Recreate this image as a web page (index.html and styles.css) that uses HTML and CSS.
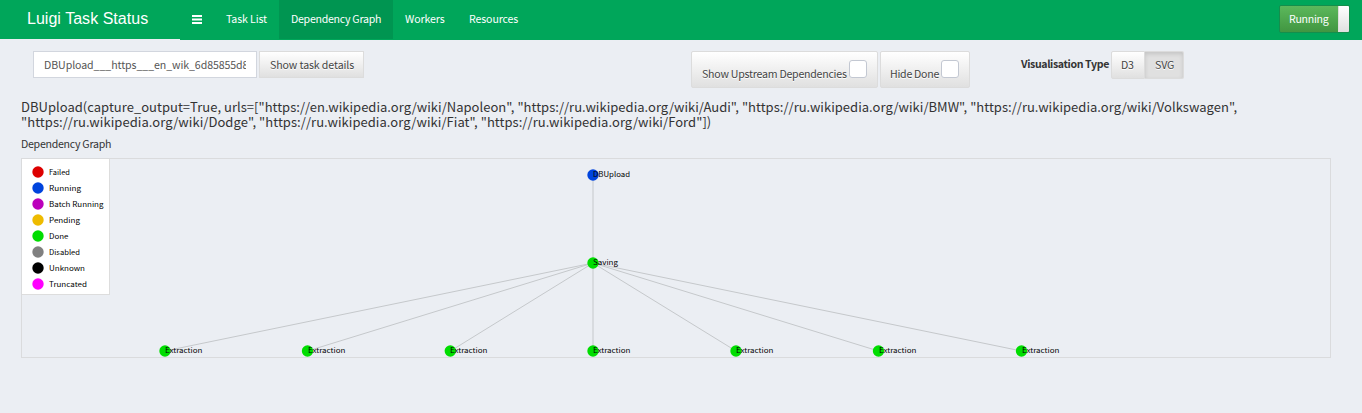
FILE: index.html
```html
<!DOCTYPE html>
<html lang="en">
<head>
<meta charset="utf-8">
<title>Luigi Task Visualiser</title>
<link rel="stylesheet" href="styles.css">
</head>
<body>
<header class="header">
  <a class="logo">Luigi Task Status</a>
  <nav class="nav">
    <a class="nav-toggle"><svg width="10" height="9" viewBox="0 0 10 9"><path d="M0 1h10M0 4.500h10M0 8h10" stroke="#fff" stroke-width="1.800"/></svg></a>
    <a class="nav-item nav-tasks">Task List</a>
    <a class="nav-item nav-graph active">Dependency Graph</a>
    <a class="nav-item nav-workers">Workers</a>
    <a class="nav-item nav-resources">Resources</a>
  </nav>
  <div class="switch"><span class="switch-on">Running</span><span class="switch-handle"></span></div>
</header>
<main class="content">
  <div class="toolbar">
    <div class="search">
      <div class="task-input"><span class="task-id">DBUpload___https___en_wik_6d85855d8</span></div>
      <button class="btn details">Show task details</button>
    </div>
    <div class="filters">
      <label class="btn filter upstream"><span>Show Upstream Dependencies</span><i class="check"></i></label>
      <label class="btn filter hide"><span>Hide Done</span><i class="check"></i></label>
    </div>
    <div class="vis">
      <b class="vis-label">Visualisation Type</b>
      <div class="group"><button class="btn d3">D3</button><button class="btn svg pressed">SVG</button></div>
    </div>
  </div>
  <h1 class="title"><span class="line one">DBUpload(capture_output=True, urls=["https://en.wikipedia.org/wiki/Napoleon", "https://ru.wikipedia.org/wiki/Audi", "https://ru.wikipedia.org/wiki/BMW", "https://ru.wikipedia.org/wiki/Volkswagen",</span> <span class="line two">"https://ru.wikipedia.org/wiki/Dodge", "https://ru.wikipedia.org/wiki/Fiat", "https://ru.wikipedia.org/wiki/Ford"])</span></h1>
  <p class="subtitle">Dependency Graph</p>
  <div class="graph">
    <svg class="canvas" width="1308" height="198" viewBox="22 159 1308 198">
      <g class="edges">
        <path d="M593 175V263M593 263L165 351M593 263L307.500 351M593 263L450.500 351M593 263V351M593 263L736 351M593 263L878.500 351M593 263L1021.500 351"/>
      </g>
      <g class="done">
        <circle cx="593" cy="175" r="5.700" class="running"/>
        <circle cx="593" cy="263" r="5.700"/><circle cx="165" cy="351" r="5.700"/><circle cx="307.500" cy="351" r="5.700"/><circle cx="450.300" cy="351" r="5.700"/><circle cx="593" cy="351" r="5.700"/><circle cx="736" cy="351" r="5.700"/><circle cx="878.500" cy="351" r="5.700"/><circle cx="1021.500" cy="351" r="5.700"/>
      </g>
      <g class="labels">
        <text x="593" y="177" textLength="37" lengthAdjust="spacingAndGlyphs">DBUpload</text>
        <text x="593" y="265" textLength="25" lengthAdjust="spacingAndGlyphs">Saving</text>
        <text x="165" y="353" textLength="37.500" lengthAdjust="spacingAndGlyphs">Extraction</text>
        <text x="308" y="353" textLength="37.500" lengthAdjust="spacingAndGlyphs">Extraction</text>
        <text x="450" y="353" textLength="37.500" lengthAdjust="spacingAndGlyphs">Extraction</text>
        <text x="593" y="353" textLength="37.500" lengthAdjust="spacingAndGlyphs">Extraction</text>
        <text x="736" y="353" textLength="37.500" lengthAdjust="spacingAndGlyphs">Extraction</text>
        <text x="879" y="353" textLength="37.500" lengthAdjust="spacingAndGlyphs">Extraction</text>
        <text x="1022" y="353" textLength="37.500" lengthAdjust="spacingAndGlyphs">Extraction</text>
      </g>
      <rect x="21" y="158" width="88.500" height="136.500" class="legend-box"/>
      <g>
        <circle cx="38" cy="172" r="5.700" fill="#d00"/><circle cx="38" cy="188" r="5.700" fill="#04d"/><circle cx="38" cy="204" r="5.700" fill="#b0b"/><circle cx="38" cy="220" r="5.700" fill="#eb0"/><circle cx="38" cy="236" r="5.700" fill="#0d0"/><circle cx="38" cy="252" r="5.700" fill="#808080"/><circle cx="38" cy="268" r="5.700" fill="#000"/><circle cx="38" cy="284" r="5.700" fill="#f0f"/>
      </g>
      <g class="labels">
        <text x="49" y="175" textLength="21" lengthAdjust="spacingAndGlyphs">Failed</text>
        <text x="49" y="191" textLength="32" lengthAdjust="spacingAndGlyphs">Running</text>
        <text x="49" y="207" textLength="54.500" lengthAdjust="spacingAndGlyphs">Batch Running</text>
        <text x="49" y="223" textLength="31" lengthAdjust="spacingAndGlyphs">Pending</text>
        <text x="49" y="239" textLength="19.500" lengthAdjust="spacingAndGlyphs">Done</text>
        <text x="49" y="255" textLength="31" lengthAdjust="spacingAndGlyphs">Disabled</text>
        <text x="49" y="271" textLength="36" lengthAdjust="spacingAndGlyphs">Unknown</text>
        <text x="49" y="287" textLength="38" lengthAdjust="spacingAndGlyphs">Truncated</text>
      </g>
    </svg>
  </div>
</main>
</body>
</html>
```
FILE: styles.css
```css
* { box-sizing: border-box; }
body { margin: 0; height: 413px; overflow: hidden; background: #ebeef3; color: #333; font: 10.6px/16px "Noto Sans CJK SC", "Open Sans", sans-serif; letter-spacing: -.12px; }
.header { display: flex; height: 40px; background: #00a65a; color: #fff; }
.logo { width: 180px; height: 40px; padding-left: 27px; border-bottom: 1px solid #ebeef3; font: 16px/38px "Liberation Sans", Arial, sans-serif; letter-spacing: .03px; white-space: nowrap; }
.nav { display: flex; height: 39px; line-height: 37px; white-space: nowrap; }
.nav-toggle { display: flex; align-items: center; width: 34px; padding-left: 12px; }
.nav-item { padding-left: 12px; }
.nav-tasks { width: 65px; }
.nav-graph { width: 114px; letter-spacing: -.27px; }
.nav-workers { width: 64px; }
.nav-resources { width: 73px; }
.active { background: #009551; }
.switch { display: flex; width: 71px; height: 28px; margin: 5px 12px 0 auto; border: 1px solid #158e4c; border-radius: 2px; overflow: hidden; }
.switch-on { width: 58px; padding-left: 9px; line-height: 25px; letter-spacing: -.3px; background: linear-gradient(#5cb85c, #419641); }
.switch-handle { flex: 1; background: linear-gradient(#fff, #e0e0e0); border-left: 1px solid #ddd; }
.content { padding: 11px 31px 0 21px; }
.toolbar { display: flex; height: 38px; }
.search { display: flex; gap: 2px; width: 670px; padding-left: 12px; }
.task-input { width: 224px; height: 27px; padding: 0 10px; border: 1px solid #d2d6de; background: #fff; color: #555; line-height: 25px; letter-spacing: -.08px; }
.task-id { display: block; width: 202px; overflow: hidden; white-space: nowrap; }
.btn { height: 27px; margin: 0; padding: 0 0 0 10px; border: 1px solid #dcdcdc; border-radius: 2px; background: linear-gradient(#fff, #e0e0e0); color: #444; font: inherit; line-height: 25px; letter-spacing: -.1px; text-align: left; text-shadow: 0 1px 0 #fff; white-space: nowrap; }
.details { width: 105px; border-radius: 0; }
.filters { display: flex; gap: 2px; width: 330px; }
.filter { display: flex; height: 37px; line-height: 43px; }
.upstream { width: 187px; letter-spacing: -.24px; }
.hide { width: 90px; padding-left: 9px; letter-spacing: -.27px; }
.check { flex: none; width: 18px; height: 18px; margin: 8px 10px 0 auto; border: 1px solid #c3c8d2; border-radius: 3px; background: #fff; }
.vis { display: flex; }
.vis-label { width: 90px; line-height: 25px; letter-spacing: -.38px; white-space: nowrap; }
.group { display: flex; height: 28px; }
.group .btn { height: 28px; line-height: 26px; }
.group .d3 { width: 34px; padding-left: 9px; letter-spacing: -.3px; border-radius: 2px 0 0 2px; }
.svg { width: 39px; border-left: 0; border-radius: 0 2px 2px 0; }
.pressed { background: #e0e0e0; box-shadow: inset 0 2px 4px rgba(0, 0, 0, .13); }
.title { margin: 10px 0 0; font-size: 13px; font-weight: 400; line-height: 15px; letter-spacing: .022px; }
.line { display: block; white-space: nowrap; }
.two { letter-spacing: .05px; }
.subtitle { margin: 7px 0 6px; line-height: 16px; letter-spacing: -.27px; }
.graph { width: 1310px; height: 200px; border: 1px solid #dadbdd; }
.canvas { display: block; }
.edges { fill: none; stroke: #c5c8cb; stroke-width: 1; }
.done { fill: #0d0; }
.running { fill: #04d; }
.labels { fill: #000; font-size: 7.3px; letter-spacing: 0; }
.legend-box { fill: #fff; stroke: #ddd; }
```
